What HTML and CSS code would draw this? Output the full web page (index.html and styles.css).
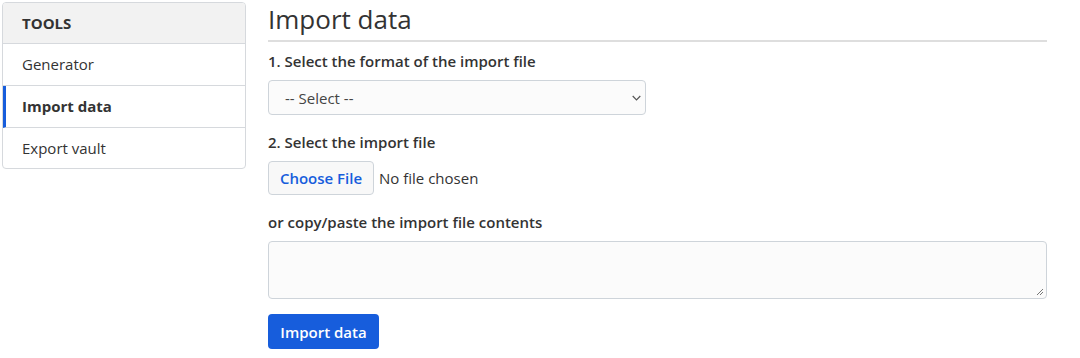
FILE: index.html
```html
<!DOCTYPE html>
<html>
<head>
<meta charset="utf-8">
<link rel="stylesheet" href="styles.css">
</head>
<body>
<div class="layout">
  <nav class="card">
    <div class="card-header">TOOLS</div>
    <a class="item">Generator</a>
    <a class="item active">Import data</a>
    <a class="item">Export vault</a>
  </nav>
  <main class="main">
    <h1 class="page-title">Import data</h1>
    <div class="field">
      <label class="label">1. Select the format of the import file</label>
      <div class="select">
        <span>-- Select --</span>
        <svg class="chev" width="9" height="6" viewBox="0 0 9 6"><path d="M0.7 1l3.8 3.8L8.3 1" fill="none" stroke="#555" stroke-width="1.2"/></svg>
      </div>
    </div>
    <div class="field">
      <label class="label">2. Select the import file</label>
      <div class="file-row">
        <span class="file-btn">Choose File</span>
        <span class="file-name">No file chosen</span>
      </div>
    </div>
    <div class="field last">
      <label class="label">or copy/paste the import file contents</label>
      <div class="textarea">
        <svg class="grip" width="9" height="9" viewBox="0 0 9 9"><path d="M8 2L2 8M8 5L5 8" stroke="#777" stroke-width="1"/></svg>
      </div>
    </div>
    <button class="btn-primary">Import data</button>
  </main>
</div>
</body>
</html>
```

FILE: styles.css
```css
* { box-sizing: border-box; }
html, body { margin: 0; background: #fff; }
body {
  font-family: "Open Sans", "Liberation Sans", sans-serif;
  font-size: 15px;
  color: #212529;
  padding: 2px;
}
.layout {
  display: grid;
  grid-template-columns: 244px 779px;
  column-gap: 22px;
  align-items: start;
}
.card {
  border: 1px solid #d6d9dd;
  border-radius: 4px;
  overflow: hidden;
  display: flex;
  flex-direction: column;
}
.card-header {
  background: #f2f2f2;
  font-weight: 700;
  height: 41px;
  line-height: 40px;
  padding-left: 19px;
  border-bottom: 1px solid #d6d9dd;
  color: #333;
}
.item {
  height: 42px;
  line-height: 41px;
  padding-left: 19px;
  border-bottom: 1px solid #d6d9dd;
  color: #333;
}
.item:last-child { border-bottom: 0; height: 40px; line-height: 40px; }
.item.active {
  font-weight: 700;
  border-left: 3px solid #175ddc;
  padding-left: 16px;
}
.main { display: flex; flex-direction: column; }
.page-title {
  margin: 0 0 8px;
  font-size: 26px;
  font-weight: 400;
  line-height: 34px;
  color: #333;
  padding-bottom: 4px;
  border-bottom: 2px solid #dedede;
}
.field { margin-bottom: 16px; }
.field.last { margin-bottom: 15px; }
.label {
  display: block;
  font-weight: 600;
  color: #333;
  line-height: 22px;
  margin-bottom: 8px;
}
.select {
  width: 378px;
  height: 35px;
  border: 1px solid #ced4da;
  border-radius: 4px;
  background: #fbfbfb;
  display: flex;
  align-items: center;
  justify-content: space-between;
  padding: 0 4px 0 16px;
  color: #444;
}
.file-row { display: flex; align-items: center; gap: 5px; }
.file-btn {
  width: 106px;
  height: 34px;
  border: 1px solid #ced4da;
  border-radius: 4px;
  background: #f8f8f8;
  color: #175ddc;
  font-weight: 600;
  display: flex;
  align-items: center;
  justify-content: center;
}
.file-name { color: #333; }
.textarea {
  position: relative;
  height: 58px;
  border: 1px solid #ced4da;
  border-radius: 4px;
  background: #fbfbfb;
}
.grip { position: absolute; right: 2px; bottom: 2px; }
.btn-primary {
  align-self: flex-start;
  width: 111px;
  height: 35px;
  border: 0;
  border-radius: 4px;
  background: #175ddc;
  color: #fff;
  font-family: inherit;
  font-size: 15px;
  font-weight: 600;
  padding: 0;
}
```
